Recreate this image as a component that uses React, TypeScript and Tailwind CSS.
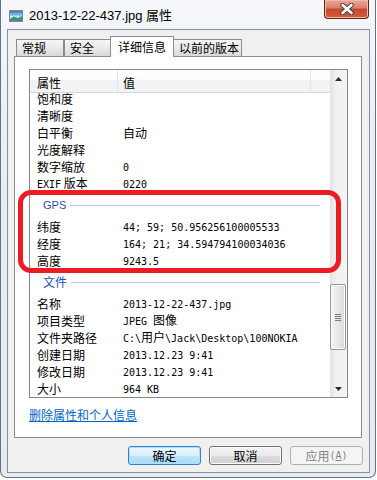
import React from "react";

const cjk = "font-['Noto_Sans_CJK_SC',sans-serif]";
const mono = "font-['DejaVu_Sans_Mono',monospace] text-[10px]";

const topRows: [string, string][] = [
  ["饱和度", ""],
  ["清晰度", ""],
  ["白平衡", "自动"],
  ["光度解释", ""],
  ["数字缩放", "0"],
  ["EXIF 版本", "0220"],
];

const gpsRows: [string, string][] = [
  ["纬度", "44; 59; 50.956256100005533"],
  ["经度", "164; 21; 34.594794100034036"],
  ["高度", "9243.5"],
];

const fileRows: [string, string][] = [
  ["名称", "2013-12-22-437.jpg"],
  ["项目类型", "JPEG 图像"],
  ["文件夹路径", "C:\\用户\\Jack\\Desktop\\100NOKIA"],
  ["创建日期", "2013.12.23 9:41"],
  ["修改日期", "2013.12.23 9:41"],
  ["大小", "964 KB"],
];

// ascii runs in a 6px-per-char mono font, the rest in the CJK font
function Mixed({ text }: { text: string }) {
  const parts = text.split(/([\x20-\x7e]+)/).filter((p) => p.length > 0);
  return (
    <>
      {parts.map((p, i) =>
        /^[\x20-\x7e]+$/.test(p) ? (
          <span key={i} className={`${mono} whitespace-pre`}>
            {p}
          </span>
        ) : (
          <span key={i} className="text-[12px]">
            {p}
          </span>
        )
      )}
    </>
  );
}

function Row({ label, value }: { label: string; value: string }) {
  return (
    <div className="h-[17px] flex items-center leading-[17px] text-black">
      <div className="w-[93px] pl-[7px] shrink-0 whitespace-nowrap">
        {label.startsWith("EXIF") ? (
          <>
            <span className={mono}>EXIF</span>
            <span className="text-[12px]"> 版本</span>
          </>
        ) : (
          <span className="text-[12px]">{label}</span>
        )}
      </div>
      <div className="whitespace-nowrap">
        <Mixed text={value} />
      </div>
    </div>
  );
}

function Group({ title }: { title: string }) {
  return (
    <div className="h-[26px] pt-[2px] flex items-center">
      <span
        className={
          title === "GPS"
            ? "pl-[13px] text-[11px] font-['Liberation_Sans',sans-serif] text-[#1f4fb5]"
            : "pl-[13px] text-[12px] text-[#1f4fb5]"
        }
      >
        {title}
      </span>
      <div className="flex-1 ml-[4px] mr-[10px] h-px bg-[#b9c8e2]" />
    </div>
  );
}

function Tab({ label, w, active }: { label: string; w: string; active?: boolean }) {
  if (active) {
    return (
      <div
        className={`${w} -ml-px h-[21px] -mb-px relative z-10 bg-white border border-b-0 border-[#898c95] flex items-center pl-[7px] text-[12px] leading-none text-black`}
      >
        {label}
      </div>
    );
  }
  return (
    <div
      className={`${w} h-[17px] bg-[linear-gradient(#f6f6f6,#e9e9e9_50%,#d9d9d9)] border border-b-0 border-[#898c95] flex items-center pl-[5px] text-[12px] leading-none text-black`}
    >
      {label}
    </div>
  );
}

function Btn({
  children,
  kind,
}: {
  children: React.ReactNode;
  kind: "default" | "normal" | "disabled";
}) {
  const cls =
    kind === "default"
      ? "border-[#3381c8] bg-[linear-gradient(#eaf6fd,#d9effc_50%,#bee6fd_51%,#a7d9f5)] shadow-[inset_0_0_0_1px_#a8e3fb] text-black"
      : kind === "normal"
      ? "border-[#707070] bg-[linear-gradient(#f2f2f2,#ebebeb_50%,#dddddd_51%,#cfcfcf)] shadow-[inset_0_0_0_1px_#fcfcfc] text-black"
      : "border-[#adb2b5] bg-[#f4f4f4] text-[#838383]";
  return (
    <div
      className={`w-[73px] h-[19px] border rounded-[3px] flex items-center justify-center text-[12px] leading-none ${cls}`}
    >
      {children}
    </div>
  );
}

export default function App() {
  return (
    <div className={`w-[377px] h-[480px] bg-white relative overflow-hidden ${cjk}`}>
      <div className="w-[376px] h-[478px] border border-t-0 border-[#65717e] rounded-b-[7px] bg-[linear-gradient(#f5f7fa,#e9eef3_30%,#e6ebf1)] flex flex-col">
        {/* title bar */}
        <div className="h-[29px] flex items-start shrink-0">
          <div className="flex items-center pl-[8px] pt-[9px]">
            <svg width="14" height="12" viewBox="0 0 14 12">
              <defs>
                <linearGradient id="sky" x1="0" y1="0" x2="0" y2="1">
                  <stop offset="0" stopColor="#2f6fa8" />
                  <stop offset="0.45" stopColor="#9cc7e6" />
                  <stop offset="0.6" stopColor="#e9f3f8" />
                  <stop offset="1" stopColor="#4b9c96" />
                </linearGradient>
              </defs>
              <rect x="0.5" y="0.5" width="13" height="11" fill="url(#sky)" stroke="#7d8a96" />
              <path d="M1 9 L5 6.5 L9 8 L13 6 L13 11 L1 11 Z" fill="#3f8f86" />
            </svg>
            <span className="ml-[6px] text-[13px] leading-none text-black font-['Liberation_Sans','Noto_Sans_CJK_SC',sans-serif]">
              2013-12-22-437.jpg 属性
            </span>
          </div>
          <div className="ml-auto mr-[6px] w-[45px] h-[19px] rounded-b-[4px] border border-t-0 border-[#6a2417] bg-[linear-gradient(#eca797,#d9806c_45%,#c8462b_50%,#d55c3c)] shadow-[inset_0_0_0_1px_#f0b8a8] flex items-center justify-center">
            <svg width="16" height="12" viewBox="0 0 16 12">
              <path d="M3.5 2 L12.5 10 M12.5 2 L3.5 10" stroke="#404040" strokeWidth="4.6" strokeLinecap="round" />
              <path d="M3.5 2 L12.5 10 M12.5 2 L3.5 10" stroke="#ffffff" strokeWidth="2.6" strokeLinecap="round" />
            </svg>
          </div>
        </div>

        {/* client area */}
        <div className="ml-[6px] w-[363px] h-[444px] border border-[#8a939c] bg-[#f0f0f0] flex flex-col">
          <div className="pt-[6px] ml-[8px] h-[26px] flex items-end">
            <Tab label="常规" w="w-[48px]" />
            <Tab label="安全" w="w-[47px]" />
            <Tab label="详细信息" w="w-[64px]" active />
            <div className="-ml-px">
              <Tab label="以前的版本" w="w-[69px]" />
            </div>
          </div>

          {/* tab panel */}
          <div className="ml-[6px] w-[348px] h-[382px] border border-[#898c95] bg-white flex flex-col">
            <div className="ml-[14px] mt-[12px] w-[319px] h-[329px] border border-[#828790] flex">
              <div className="flex-1 flex flex-col overflow-hidden">
                <div className="h-[23px] shrink-0 flex border-b border-[#d5d5d5] bg-[linear-gradient(#ffffff,#ffffff_42%,#f2f3f5_46%,#f2f3f5)] text-[12px] text-black">
                  <div className="w-[88px] border-r border-[#e2e3e5] pl-[7px] pt-[4px] flex items-center">属性</div>
                  <div className="w-[193px] border-r border-[#e2e3e5] pl-[5px] pt-[4px] flex items-center">值</div>
                  <div className="flex-1" />
                </div>
                <div className="flex-1 overflow-hidden">
                  <div className="-mt-[4px]">
                    {topRows.map(([l, v]) => (
                      <Row key={l} label={l} value={v} />
                    ))}
                    <Group title="GPS" />
                    {gpsRows.map(([l, v]) => (
                      <Row key={l} label={l} value={v} />
                    ))}
                    <Group title="文件" />
                    {fileRows.map(([l, v]) => (
                      <Row key={l} label={l} value={v} />
                    ))}
                  </div>
                </div>
              </div>

              {/* scrollbar */}
              <div className="w-[17px] shrink-0 flex flex-col bg-[linear-gradient(90deg,#e3e3e3,#f1f1f1_35%,#f4f4f4)]">
                <div className="h-[17px] flex items-center justify-center">
                  <svg width="7" height="4" viewBox="0 0 7 4">
                    <path d="M0 4 L3.5 0 L7 4 Z" fill="#2b2b2b" />
                  </svg>
                </div>
                <div className="flex-1">
                  <div className="mt-[197px] w-[16px] h-[66px] rounded-[2px] border border-[#979797] bg-[linear-gradient(90deg,#f5f5f5,#e8e8e8_50%,#d8d8d8)] shadow-[inset_0_0_0_1px_#fbfbfb] flex flex-col items-center justify-center gap-[1px]">
                    <div className="w-[6px] h-px bg-[#7a7a7a]" />
                    <div className="w-[6px] h-px bg-[#7a7a7a]" />
                    <div className="w-[6px] h-px bg-[#7a7a7a]" />
                    <div className="w-[6px] h-px bg-[#7a7a7a]" />
                  </div>
                </div>
                <div className="h-[17px] flex items-center justify-center">
                  <svg width="7" height="4" viewBox="0 0 7 4">
                    <path d="M0 0 L7 0 L3.5 4 Z" fill="#2b2b2b" />
                  </svg>
                </div>
              </div>
            </div>

            <div className="mt-[9px] ml-[14px] text-[12px] leading-[16px] text-[#0066cc] underline">
              删除属性和个人信息
            </div>
          </div>

          {/* buttons */}
          <div className="mt-[8px] pr-[6px] flex justify-end gap-[8px]">
            <Btn kind="default">确定</Btn>
            <Btn kind="normal">取消</Btn>
            <Btn kind="disabled">
              应用
              <span className={mono}>
                (<span className="underline">A</span>)
              </span>
            </Btn>
          </div>
        </div>
      </div>

      {/* red annotation */}
      <div className="absolute left-[18px] top-[190px] w-[323px] h-[83px] border-[5px] border-[#ed1c24] rounded-[13px]" />
    </div>
  );
}
